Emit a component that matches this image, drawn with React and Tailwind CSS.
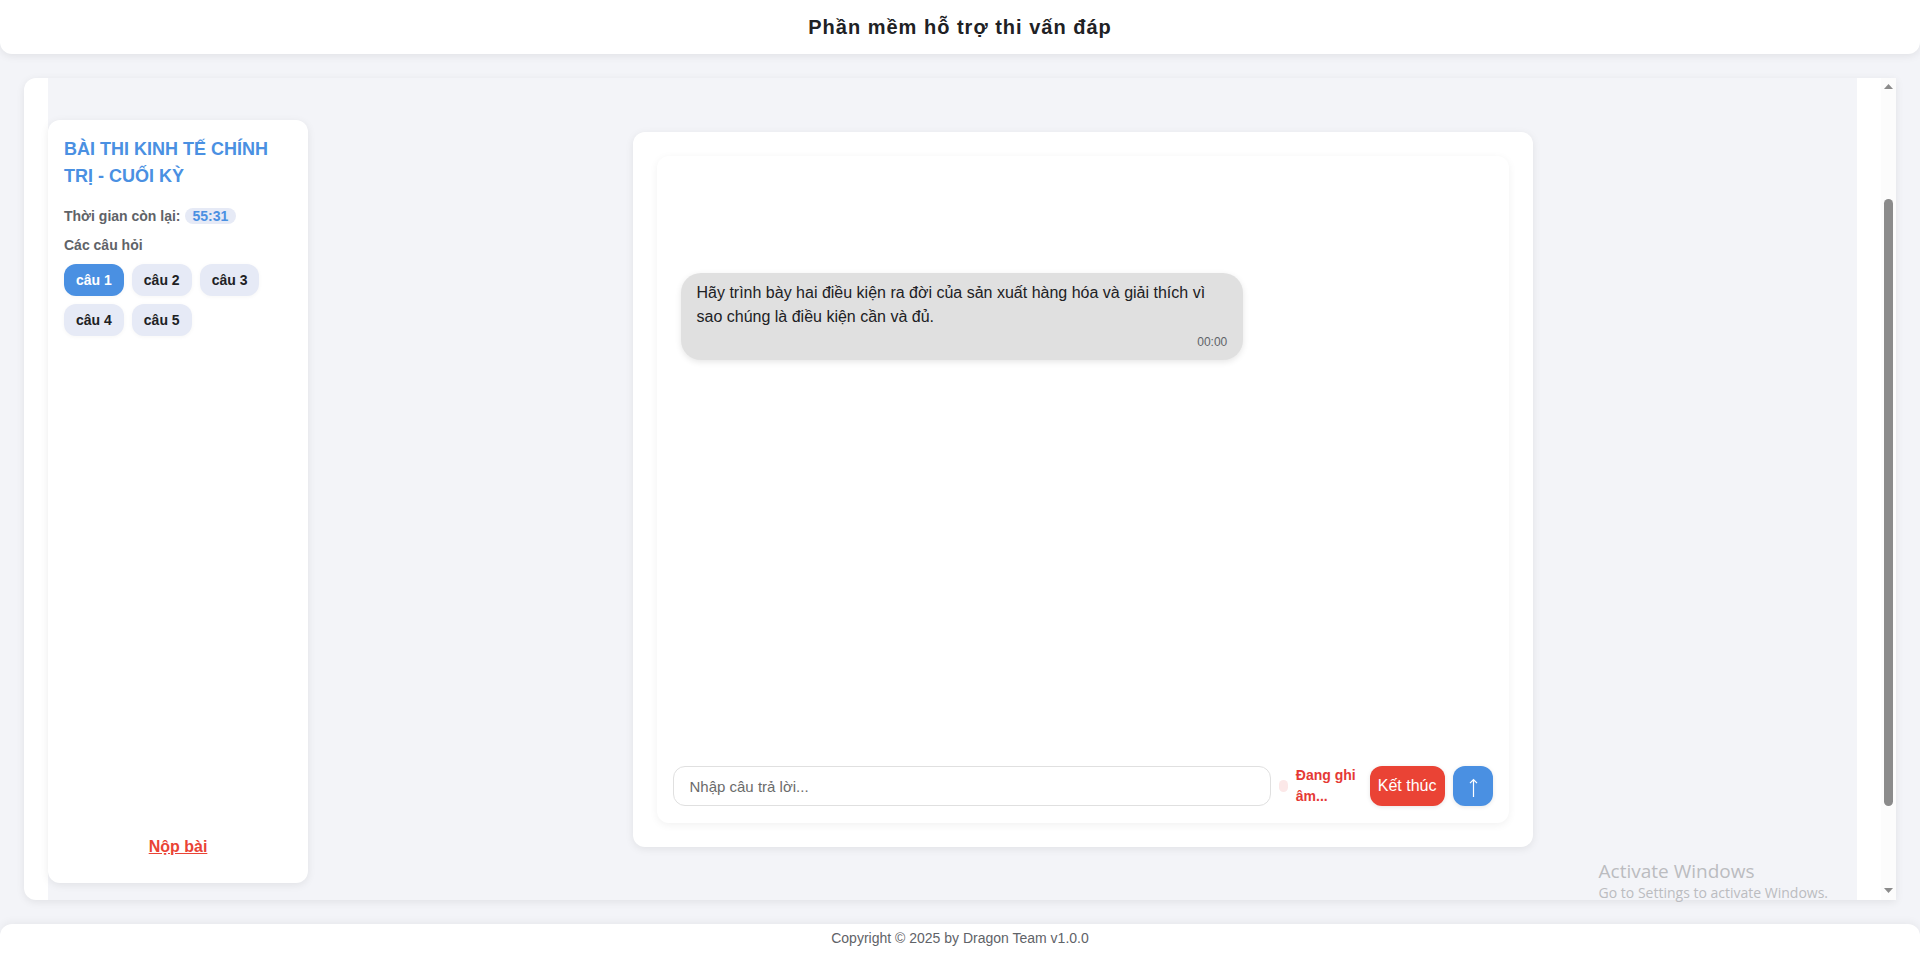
const questions = ["câu 1", "câu 2", "câu 3", "câu 4", "câu 5"];

function Sidebar() {
  return (
    <aside className="mt-[42px] mb-[17px] flex w-[260px] shrink-0 flex-col rounded-xl bg-white p-4 shadow-[0_2px_8px_rgba(0,0,0,0.08)]">
      <h2 className="text-lg leading-[27px] font-bold text-[#4a90e2]">BÀI THI KINH TẾ CHÍNH TRỊ - CUỐI KỲ</h2>
      <p className="mt-4 flex items-center gap-1 text-sm leading-5 font-bold text-[#5f6368]">
        Thời gian còn lại:
        <span className="rounded-lg bg-[#e6eaf6] px-2 leading-4 text-[#4a90e2]">55:31</span>
      </p>
      <h3 className="mt-2 text-sm leading-[22px] font-bold text-[#5f6368]">Các câu hỏi</h3>
      <div className="mt-2 flex flex-wrap gap-2">
        {questions.map((q, i) => (
          <button
            key={q}
            type="button"
            className={
              "h-8 rounded-xl px-3 text-sm font-bold shadow-[0_1px_4px_rgba(0,0,0,0.04)] " +
              (i === 0 ? "bg-[#4a90e2] text-white" : "bg-[#e6eaf6] text-[#202124]")
            }
          >
            {q}
          </button>
        ))}
      </div>
      <a href="#submit" className="mt-auto mb-2 self-center text-base leading-6 font-bold text-[#ea4335] underline">
        Nộp bài
      </a>
    </aside>
  );
}

function Chat() {
  return (
    <section className="flex flex-1 justify-center pt-[54px] pb-[53px]">
      <div className="flex w-[900px] flex-col rounded-xl bg-white p-6 shadow-[0_2px_8px_rgba(0,0,0,0.08)]">
        <div className="flex flex-1 flex-col rounded-xl px-4 pb-4 shadow-[0_2px_8px_rgba(0,0,0,0.06)]">
          <div className="flex flex-1 flex-col items-start px-2 pt-[117px]">
            <div className="w-[70%] rounded-[20px] bg-[#e0e0e0] px-4 py-2 text-base leading-6 text-[#202124] shadow-[0_2px_6px_rgba(0,0,0,0.1)]">
              <p>Hãy trình bày hai điều kiện ra đời của sản xuất hàng hóa và giải thích vì sao chúng là điều kiện cần và đủ.</p>
              <p className="mt-1 text-right text-xs leading-[19px] text-[#5f6368]">00:00</p>
            </div>
          </div>
          <form className="flex items-center gap-2" onSubmit={(e) => e.preventDefault()}>
            <input
              type="text"
              aria-label="Câu trả lời"
              placeholder="Nhập câu trả lời..."
              className="h-10 min-w-0 flex-1 rounded-xl border border-[#e0e0e0] bg-white px-4 text-[15px] text-[#202124] placeholder:text-[#6b6b6b]"
            />
            <span className="h-3 w-[9px] shrink-0 rounded-full bg-[#fce8e8]" />
            <span className="w-[66px] shrink-0 text-sm leading-[21px] font-bold text-[#e53935]">Đang ghi âm...</span>
            <button type="button" className="h-10 rounded-xl bg-[#ea4335] px-2 text-base text-white shadow-[0_1px_4px_rgba(0,0,0,0.1)]">
              Kết thúc
            </button>
            <button
              type="submit"
              aria-label="Gửi"
              className="flex size-10 items-center justify-center rounded-xl bg-[#4a90e2] text-white shadow-[0_1px_4px_rgba(0,0,0,0.1)]"
            >
              <svg width="10" height="20" viewBox="0 0 10 20" fill="none" stroke="currentColor" strokeWidth="1.2" className="mt-1">
                <path d="M5.5 19V2M2 5.2 5.5 1.6 9 5.2" />
              </svg>
            </button>
          </form>
        </div>
      </div>
    </section>
  );
}

function ScrollTrack() {
  return (
    <div className="flex w-[15px] shrink-0 flex-col items-center bg-[#fcfcfc] pt-1.5 pb-[7px]" aria-hidden="true">
      <svg width="9" height="5" viewBox="0 0 9 5" fill="#8b8b8b">
        <path d="M0 5 4.5 0 9 5Z" />
      </svg>
      <div className="mt-[110px] mb-[82px] w-[9px] flex-1 rounded-full bg-[#8b8b8b]" />
      <svg width="9" height="5" viewBox="0 0 9 5" fill="#8b8b8b">
        <path d="M0 0 4.5 5 9 0Z" />
      </svg>
    </div>
  );
}

export default function App() {
  return (
    <div className="relative flex min-h-screen flex-col gap-6 bg-[#f3f4f8] font-['Liberation_Sans',Arial,sans-serif]">
      <header className="flex h-[54px] items-center justify-center rounded-b-xl bg-white shadow-[0_2px_8px_rgba(0,0,0,0.08)]">
        <h1 className="text-xl font-bold tracking-[1px] text-[#202124]">Phần mềm hỗ trợ thi vấn đáp</h1>
      </header>
      <main className="mx-6 flex flex-1 rounded-l-xl bg-white pl-6 shadow-[0_2px_8px_rgba(0,0,0,0.08)]">
        <div className="mr-6 flex flex-1 bg-[#f3f4f8]">
          <Sidebar />
          <Chat />
        </div>
        <ScrollTrack />
      </main>
      <footer className="flex h-8 items-center justify-center rounded-t-xl bg-white text-sm text-[#5f6368] shadow-[0_-2px_8px_rgba(0,0,0,0.05)]">
        <p className="pb-1">Copyright © 2025 by Dragon Team v1.0.0</p>
      </footer>
      <div className="pointer-events-none absolute right-[92px] bottom-[53px] font-['Open_Sans','Noto_Sans',sans-serif] text-[#bbbcc0]">
        <p className="text-[19px] leading-6">Activate Windows</p>
        <p className="text-sm leading-5">Go to Settings to activate Windows.</p>
      </div>
    </div>
  );
}
